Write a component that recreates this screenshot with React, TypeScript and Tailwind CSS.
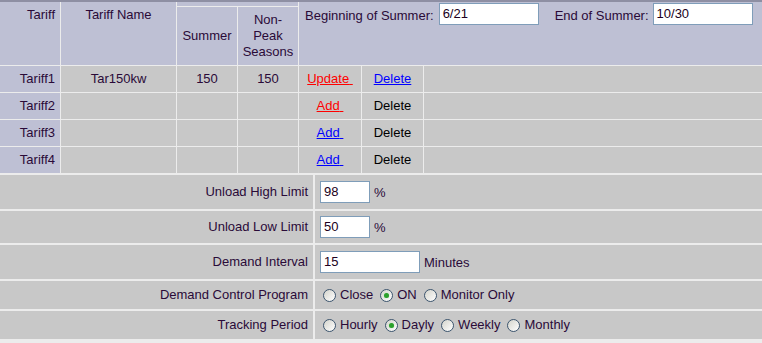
const lav = "bg-[#bec0d4]";
const gray = "bg-[#c8c8c8]";

const tariffs = [
  { id: "Tariff1", name: "Tar150kw", summer: "150", peak: "150", action: "Update", actionColor: "text-[#ff0000]", del: true },
  { id: "Tariff2", name: "", summer: "", peak: "", action: "Add", actionColor: "text-[#ff0000]", del: false },
  { id: "Tariff3", name: "", summer: "", peak: "", action: "Add", actionColor: "text-[#0000ff]", del: false },
  { id: "Tariff4", name: "", summer: "", peak: "", action: "Add", actionColor: "text-[#0000ff]", del: false },
];

function Radio({ label, checked }: { label: string; checked?: boolean }) {
  return (
    <label className="flex items-center">
      <span className="w-[13px] h-[13px] rounded-full border border-[#3c556e] bg-linear-to-br from-[#d4d4cc] to-white flex items-center justify-center mr-[4px]">
        {checked && <span className="w-[5px] h-[5px] rounded-full bg-[#2ca02c] shadow-[0_0_1px_#8fdc8f]" />}
      </span>
      <span>{label}</span>
    </label>
  );
}

function TextBox({ value, w }: { value: string; w: string }) {
  return (
    <div className={`${w} h-[22px] bg-white border border-[#7f9db9] px-[3px] flex items-center text-[#200020]`}>
      {value}
    </div>
  );
}

export default function App() {
  return (
    <div className="w-[762px] h-[343px] overflow-hidden bg-[#ececec] text-[13px] text-[#2a0a38] font-['Liberation_Sans',Arial,sans-serif] border-t-2 border-[#8e8fa3] flex flex-col gap-[2px]">
      {/* Tariff table */}
      <div className="grid grid-cols-[60px_115px_60px_60px_62px_61px_1fr] grid-rows-[4px_58px_26px_26px_26px_26px] gap-px">
        <div className={`${lav} col-start-1 row-start-1 row-span-2 text-right pr-[5px] pt-[3px]`}>Tariff</div>
        <div className={`${lav} col-start-2 row-start-1 row-span-2 text-center pt-[3px]`}>Tariff Name</div>
        <div className={`${lav} col-start-3 col-span-2 row-start-1`} />
        <div className={`${lav} col-start-3 row-start-2 flex items-center justify-center`}>Summer</div>
        <div className={`${lav} col-start-4 row-start-2 flex items-center justify-center text-center leading-[16px]`}>
          Non-<br />Peak<br />Seasons
        </div>
        <div className={`${lav} col-start-5 col-span-3 row-start-1 row-span-2 flex items-start pl-[6px] pt-px`}>
          <span className="mt-[3px] mr-[5px]">Beginning of Summer:</span>
          <TextBox value="6/21" w="w-[100px]" />
          <span className="mt-[3px] ml-[16px] mr-[4px]">End of Summer:</span>
          <TextBox value="10/30" w="w-[100px]" />
        </div>

        {tariffs.map((t) => (
          <div key={t.id} className="contents">
            <div className={`${lav} text-right pr-[5px] flex items-center justify-end`}>{t.id}</div>
            <div className={`${gray} flex items-center justify-center`}>{t.name}</div>
            <div className={`${gray} flex items-center justify-center`}>{t.summer}</div>
            <div className={`${gray} flex items-center justify-center`}>{t.peak}</div>
            <div className={`${gray} flex items-center justify-center`}>
              <span className={`${t.actionColor} underline`}>{t.action}&nbsp;</span>
            </div>
            <div className={`${gray} flex items-center justify-center`}>
              {t.del ? <span className="text-[#0000ff] underline">Delete</span> : <span className="text-black">Delete</span>}
            </div>
            <div className={gray} />
          </div>
        ))}
      </div>

      {/* Settings */}
      <div className="grid grid-cols-[313px_1fr] grid-rows-[34px_32px_34px_28px_28px] gap-[2px] pb-[2px]">
        <div className={`${gray} flex items-center justify-end pr-[5px]`}>Unload High Limit</div>
        <div className={`${gray} flex items-center pl-[5px]`}>
          <TextBox value="98" w="w-[50px]" />
          <span className="ml-[4px] mt-[2px]">%</span>
        </div>

        <div className={`${gray} flex items-center justify-end pr-[5px]`}>Unload Low Limit</div>
        <div className={`${gray} flex items-center pl-[5px]`}>
          <TextBox value="50" w="w-[50px]" />
          <span className="ml-[4px] mt-[2px]">%</span>
        </div>

        <div className={`${gray} flex items-center justify-end pr-[5px]`}>Demand Interval</div>
        <div className={`${gray} flex items-center pl-[5px]`}>
          <TextBox value="15" w="w-[100px]" />
          <span className="ml-[4px] mt-[2px]">Minutes</span>
        </div>

        <div className={`${gray} flex items-center justify-end pr-[5px]`}>Demand Control Program</div>
        <div className={`${gray} flex items-center gap-[7px] pl-[8px]`}>
          <Radio label="Close" />
          <Radio label="ON" checked />
          <Radio label="Monitor Only" />
        </div>

        <div className={`${gray} flex items-center justify-end pr-[5px]`}>Tracking Period</div>
        <div className={`${gray} flex items-center gap-[7px] pl-[8px]`}>
          <Radio label="Hourly" />
          <Radio label="Dayly" checked />
          <Radio label="Weekly" />
          <Radio label="Monthly" />
        </div>
      </div>
      <div className={`${gray} flex-1`} />
    </div>
  );
}
